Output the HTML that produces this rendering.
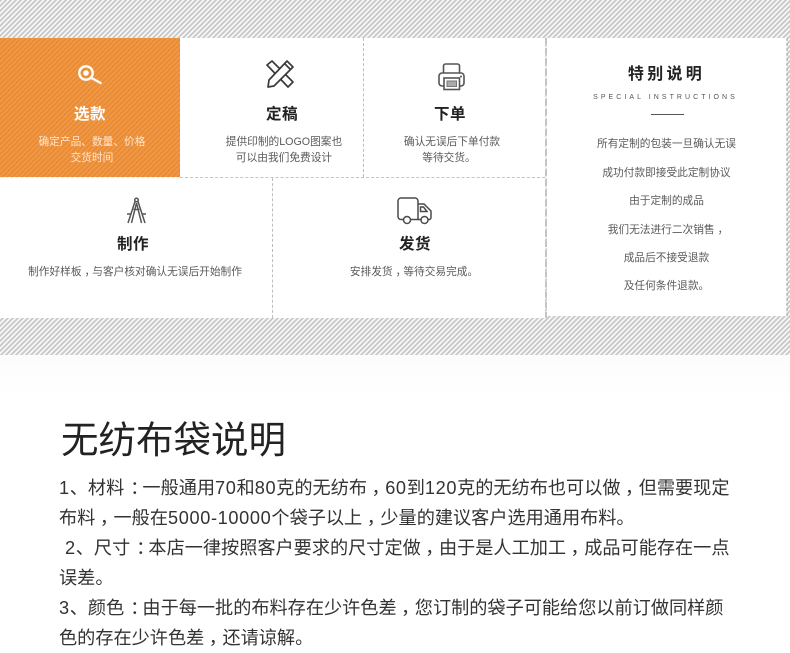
<!DOCTYPE html>
<html lang="zh">
<head>
<meta charset="utf-8">
<style>
html,body{margin:0;padding:0;background:#fff}
body{width:790px;height:653px;position:relative;overflow:hidden;font-family:"Liberation Sans","Noto Sans CJK SC",sans-serif}
.abs,.t,.h,.s,.l{position:absolute;white-space:nowrap}
#st{left:0;top:0;width:790px;height:355px;background:repeating-linear-gradient(135deg,#c8c8c8 0,#c8c8c8 1.750px,#f6f6f6 1.750px,#f6f6f6 3.5355px)}
.w{position:absolute;background:#fff}
.dv{position:absolute;width:0;border-left:1px dashed #bdbdbd}
.dh{position:absolute;height:0;border-top:1px dashed #c4c4c4}
.h{font-size:15.5px;font-weight:700;color:#222;text-align:center;letter-spacing:.5px;line-height:20px}
.s{font-size:10.7px;color:#5a5a5a;text-align:center;line-height:16px}
.l{font-size:18.170px;color:#333;line-height:30px;left:59px}
.l b{font-weight:400;letter-spacing:.65px}
i{font-style:normal;position:relative;left:4.500px}
em{font-style:normal;position:relative;left:6px}
.s i{left:3px}
svg{position:absolute;overflow:visible}
</style>
</head>
<body>
<div class="abs" id="st"></div>
<div class="abs" style="left:0;top:355px;width:790px;height:45px;background:linear-gradient(#fcfcfc,#fff)"></div>

<div class="w" style="left:0;top:38px;width:545px;height:280px"></div>
<div class="w" style="left:547px;top:38px;width:239px;height:278px"></div>

<div class="abs" style="left:0;top:38px;width:180px;height:139px;background:repeating-linear-gradient(135deg,#ea8c34 0,#ea8c34 2px,#f09a4b 2px,#f09a4b 3.5355px)"></div>

<div class="dv" style="left:363px;top:38px;height:139px"></div>
<div class="dh" style="left:180px;top:177px;width:365px"></div>
<div class="dh" style="left:0;top:177px;width:180px;border-color:#eee"></div>
<div class="dv" style="left:272px;top:178px;height:140px"></div>
<div class="dv" style="left:545px;top:38px;height:280px;border-left:2px dashed #c4c4c4"></div>
<div class="dv" style="left:787px;top:38px;height:278px"></div>

<!-- search -->
<svg style="left:77px;top:64px" width="26" height="22" viewBox="0 0 26 22" fill="none" stroke="#fff">
<circle cx="9" cy="9" r="6.700" stroke-width="2.400"/><circle cx="9" cy="9" r="2.800" fill="#fff" stroke="none"/>
<path d="M14.500 14l10 5.500" stroke-width="2.200"/></svg>
<!-- pencil ruler -->
<svg style="left:266px;top:60px" width="29" height="29" viewBox="0 0 29 29" fill="#fff" stroke="#3a3a3a" stroke-width="1.700" stroke-linejoin="round">
<path d="M1 5l5-4 21 21-5 5z"/>
<path d="M21 1l6 6L8 26l-6 1 1-7z"/>
<path d="M18.500 3.500l6 6" fill="none"/>
</svg>
<!-- printer -->
<svg style="left:438px;top:63px" width="29" height="28" viewBox="0 0 29 28" fill="none" stroke="#555" stroke-width="1.600">
<path d="M5.500 10V3a2 2 0 0 1 2-2h12a2 2 0 0 1 2 2v7"/><path d="M6 23H4a3 3 0 0 1-3-3v-7a3 3 0 0 1 3-3h19a3 3 0 0 1 3 3v7a3 3 0 0 1-3 3h-2"/>
<rect x="6" y="15" width="15.500" height="11.500" fill="#fff"/><rect x="9" y="18" width="9.500" height="5.500" fill="#aaa" stroke="#777" stroke-width="1"/><circle cx="23" cy="13.500" r="1" fill="#555" stroke="none"/>
</svg>

<div class="h" style="left:0;top:105px;width:180px;color:#fff">选款</div>
<div class="s" style="left:2px;top:134px;width:180px;color:#ffe6cf">确定产品、数量、价格</div>
<div class="s" style="left:2px;top:150px;width:180px;color:#ffe6cf">交货时间</div>

<div class="h" style="left:192px;top:105px;width:180px">定稿</div>
<div class="s" style="left:194px;top:134px;width:180px">提供印制的LOGO图案也</div>
<div class="s" style="left:194px;top:150px;width:180px">可以由我们免费设计</div>

<div class="h" style="left:360px;top:105px;width:180px">下单</div>
<div class="s" style="left:362px;top:134px;width:180px">确认无误后下单付款</div>
<div class="s" style="left:359px;top:150px;width:180px">等待交货。</div>

<!-- compass -->
<svg style="left:126px;top:197px" width="21" height="28" viewBox="0 0 21 28" fill="none" stroke="#555" stroke-width="1.500">
<circle cx="10.500" cy="3" r="1.800"/><path d="M9 4.500L2 26M12 4.500l7 21.500M10.500 6L5.500 26M10.500 6l5 20M1 17h4.500M15.500 17H20M7.500 12.500h6"/>
</svg>
<!-- truck -->
<svg style="left:397px;top:197px" width="36" height="28" viewBox="0 0 36 28" fill="none" stroke="#4a4a4a" stroke-width="1.500">
<path d="M6.500 22.500H4a3 3 0 0 1-3-3V4a3 3 0 0 1 3-3h14a3 3 0 0 1 3 3v18.500H13.500"/>
<path d="M21 7h6l7 7v6.500a2 2 0 0 1-2 2h-1M24 22.500h-3"/><path d="M23.500 10h3l3.500 4.500h-6.500z"/>
<circle cx="10" cy="23" r="3.500"/><circle cx="27.500" cy="23" r="3.500"/>
</svg>

<div class="h" style="left:43px;top:235px;width:180px">制作</div>
<div class="s" style="left:0;top:264px;width:270px">制作好样板<i>，</i>与客户核对确认无误后开始制作</div>
<div class="h" style="left:325px;top:235px;width:180px">发货</div>
<div class="s" style="left:349px;top:264px;width:130px">安排发货<i>，</i>等待交易完成。</div>

<div class="abs" style="left:547px;top:65px;width:239px;text-align:center;font-size:16px;font-weight:700;color:#222;letter-spacing:3.300px;line-height:20px">特别说明</div>
<div class="abs" style="left:546px;top:91px;width:239px;text-align:center;font-size:7px;color:#555;letter-spacing:3.050px;line-height:13px">SPECIAL INSTRUCTIONS</div>
<div class="abs" style="left:651px;top:114px;width:33px;height:1px;background:#555"></div>
<div class="s" style="left:547px;top:136px;width:239px">所有定制的包装一旦确认无误</div>
<div class="s" style="left:547px;top:165px;width:239px">成功付款即接受此定制协议</div>
<div class="s" style="left:547px;top:193px;width:239px">由于定制的成品</div>
<div class="s" style="left:547px;top:222px;width:239px">我们无法进行二次销售<i>，</i></div>
<div class="s" style="left:547px;top:250px;width:239px">成品后不接受退款</div>
<div class="s" style="left:547px;top:278px;width:239px">及任何条件退款。</div>

<div class="abs" style="left:61px;top:417px;font-size:37.500px;line-height:46px;color:#222">无纺布袋说明</div>
<div class="l" style="top:473px"><b>1</b>、材料<em>：</em>一般通用<b>70</b>和<b>80</b>克的无纺布<i>，</i><b>60</b>到<b>120</b>克的无纺布也可以做<i>，</i>但需要现定</div>
<div class="l" style="top:503px">布料<i>，</i>一般在<b>5000-10000</b>个袋子以上<i>，</i>少量的建议客户选用通用布料。</div>
<div class="l" style="top:533px;left:65px"><b>2</b>、尺寸<em>：</em>本店一律按照客户要求的尺寸定做<i>，</i>由于是人工加工<i>，</i>成品可能存在一点</div>
<div class="l" style="top:563px">误差。</div>
<div class="l" style="top:593px"><b>3</b>、颜色<em>：</em>由于每一批的布料存在少许色差<i>，</i>您订制的袋子可能给您以前订做同样颜</div>
<div class="l" style="top:623px">色的存在少许色差<i>，</i>还请谅解。</div>
</body>
</html>
